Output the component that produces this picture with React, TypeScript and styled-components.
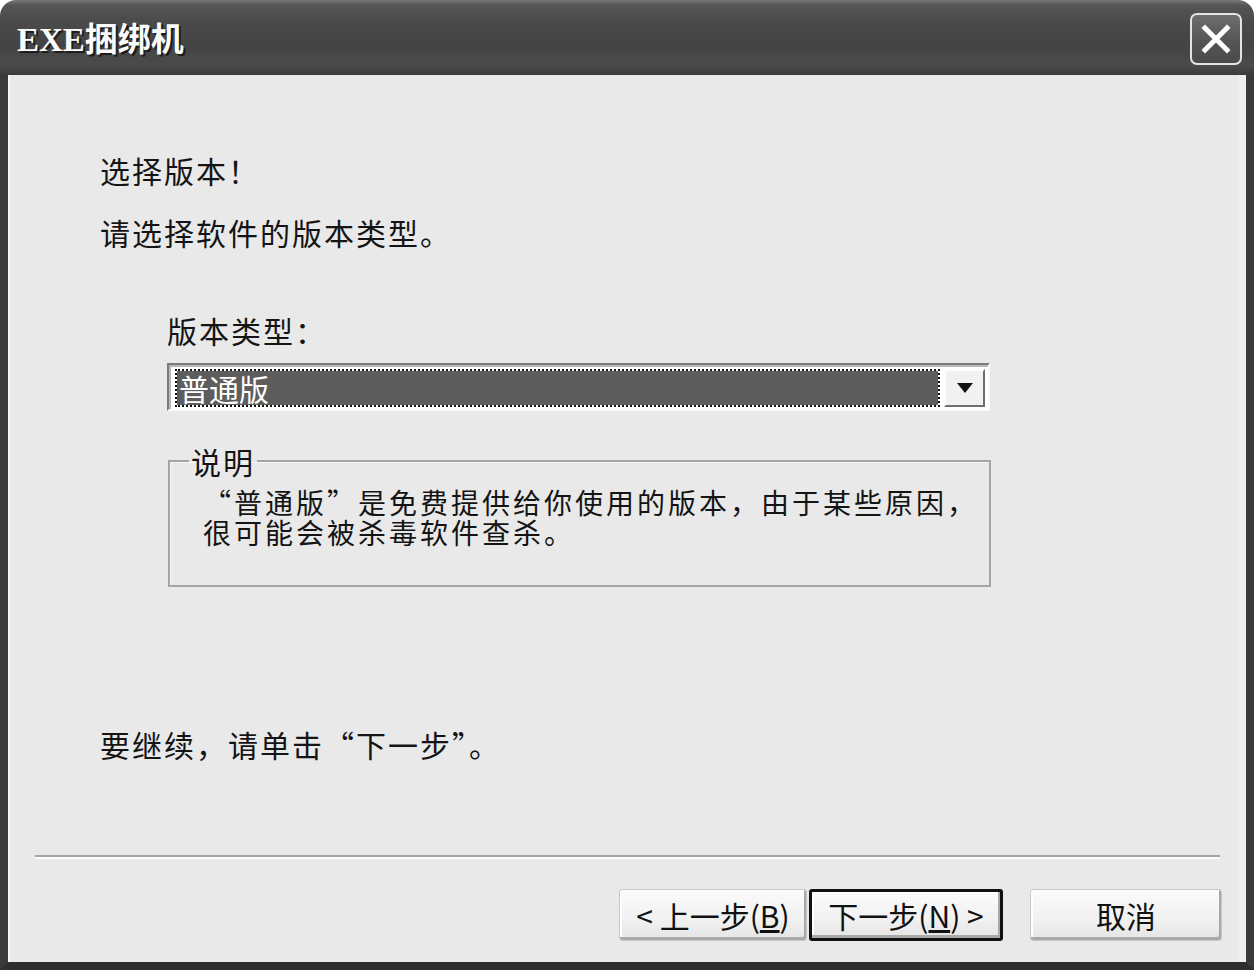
import React from "react";
import styled, { createGlobalStyle } from "styled-components";

const GlobalStyle = createGlobalStyle`
  html, body {
    margin: 0;
    padding: 0;
    background: #ffffff;
  }
  body {
    font-family: "Noto Sans CJK SC", "Noto Sans", sans-serif;
    color: #141414;
  }
`;

const Window = styled.div`
  width: 1254px;
  height: 970px;
  display: flex;
  flex-direction: column;
  box-sizing: border-box;
`;

const TitleBar = styled.div`
  height: 75px;
  flex: none;
  display: flex;
  align-items: center;
  justify-content: space-between;
  padding: 0 12px 0 17px;
  box-sizing: border-box;
  border-radius: 16px 16px 0 0;
  background: linear-gradient(
    #767676 0,
    #555555 7%,
    #4a4a4a 30%,
    #444444 60%,
    #4b4b4b 88%,
    #3a3a3a 100%
  );
`;

const Title = styled.div`
  font-family: "Liberation Serif", "Noto Sans CJK SC", serif;
  font-weight: 700;
  font-size: 33px;
  line-height: 40px;
  color: #fbfbfb;
  text-shadow: 2px 2px 0 #1c1c1c;
  margin-top: 4px;
`;

const CloseButton = styled.div`
  width: 52px;
  height: 52px;
  box-sizing: border-box;
  border: 2px solid #e4e4e4;
  border-radius: 7px;
  background: linear-gradient(#6e6e6e, #555555 55%, #4a4a4a);
  display: flex;
  align-items: center;
  justify-content: center;
  margin-top: 2px;
`;

const Frame = styled.div`
  flex: 1;
  display: flex;
  flex-direction: column;
  border-left: 8px solid #3a3a3a;
  border-right: 8px solid #3a3a3a;
  border-bottom: 8px solid #2e2e2e;
  background: #e9e9e9;
  box-shadow: inset 2px 0 0 #f6f6f6, inset -8px 0 0 #eeeeee;
`;

const Content = styled.div`
  flex: 1;
  display: flex;
  flex-direction: column;
  padding: 75px 0 0 92px;
`;

const Text = styled.div<{ $gap?: number; $indent?: number }>`
  font-size: 30px;
  line-height: 40px;
  letter-spacing: 2px;
  margin-top: ${(p) => p.$gap ?? 0}px;
  margin-left: ${(p) => p.$indent ?? 0}px;
  white-space: nowrap;
`;

const Combo = styled.div`
  margin: 13px 0 0 67px;
  width: 823px;
  height: 48px;
  box-sizing: border-box;
  display: flex;
  align-items: stretch;
  gap: 4px;
  padding: 4px 3px 2px 6px;
  background: #ffffff;
  border-top: 2px solid #7c7c7c;
  border-left: 2px solid #7c7c7c;
  border-right: 2px solid #fafafa;
  border-bottom: 2px solid #fafafa;
  box-shadow: inset 2px 2px 0 #b8b8b8;
`;

const Selection = styled.div`
  flex: 1;
  display: flex;
  align-items: center;
  padding-left: 2px;
  background-color: #5d5d5d;
  background-clip: padding-box;
  border: 2px dotted #111111;
  color: #ffffff;
  font-size: 30px;
  line-height: 30px;
`;

const DropButton = styled.div`
  width: 41px;
  box-sizing: border-box;
  display: flex;
  align-items: center;
  justify-content: center;
  background: #f1f1f1;
  border-top: 2px solid #fdfdfd;
  border-left: 2px solid #fdfdfd;
  border-right: 2px solid #6e6e6e;
  border-bottom: 2px solid #6e6e6e;
`;

const Arrow = styled.div`
  width: 0;
  height: 0;
  border-left: 8px solid transparent;
  border-right: 8px solid transparent;
  border-top: 10px solid #111111;
`;

const GroupBox = styled.fieldset`
  margin: 30px 0 0 68px;
  width: 823px;
  box-sizing: border-box;
  padding: 6px 0 38px 33px;
  border: 2px solid #a4a4a4;
  box-shadow: inset 1px 1px 0 #f7f7f7;
  min-inline-size: 0;
`;

const Legend = styled.legend`
  margin-left: -14px;
  padding: 0 2px;
  font-size: 30px;
  line-height: 40px;
  letter-spacing: 2px;
`;

const Description = styled.div`
  font-size: 28px;
  line-height: 30px;
  letter-spacing: 3px;
  white-space: nowrap;
`;

const Separator = styled.div`
  margin: 91px 0 0 -65px;
  width: 1185px;
  height: 2px;
  background: #a3a3a3;
  border-bottom: 2px solid #fbfbfb;
`;

const ButtonRow = styled.div`
  display: flex;
  justify-content: flex-end;
  align-items: center;
  margin: 30px 24px 0 0;
`;

const Button = styled.div<{ $default?: boolean; $width: number; $gap?: number }>`
  width: ${(p) => p.$width}px;
  height: 52px;
  box-sizing: border-box;
  margin-left: ${(p) => p.$gap ?? 0}px;
  display: flex;
  align-items: center;
  justify-content: center;
  font-size: 30px;
  line-height: 30px;
  color: #111111;
  border-radius: 3px;
  background: linear-gradient(#fbfbfb, #f1f1f1 60%, #e4e4e4);
  border: ${(p) => (p.$default ? "3px solid #111111" : "1px solid #c8c8c8")};
  box-shadow: inset -2px -3px 0 #a9a9a9, inset 2px 2px 0 #ffffff;
  white-space: pre;
`;

export default function App() {
  return (
    <>
      <GlobalStyle />
      <Window>
        <TitleBar>
          <Title>EXE捆绑机</Title>
          <CloseButton>
            <svg width="30" height="30" viewBox="0 0 30 30">
              <path d="M4 4 L26 26 M26 4 L4 26" stroke="#ffffff" strokeWidth="5" strokeLinecap="square" />
            </svg>
          </CloseButton>
        </TitleBar>
        <Frame>
          <Content>
            <Text>选择版本！</Text>
            <Text $gap={22}>请选择软件的版本类型。</Text>
            <Text $gap={58} $indent={67}>版本类型：</Text>
            <Combo>
              <Selection>普通版</Selection>
              <DropButton>
                <Arrow />
              </DropButton>
            </Combo>
            <GroupBox>
              <Legend>说明</Legend>
              <Description>
                “普通版”是免费提供给你使用的版本，由于某些原因，
                <br />
                很可能会被杀毒软件查杀。
              </Description>
            </GroupBox>
            <Text $gap={137}>要继续，请单击“下一步”。</Text>
            <Separator />
            <ButtonRow>
              <Button $width={188}>
                {"< 上一步("}<u>B</u>{")"}
              </Button>
              <Button $width={194} $gap={2} $default>
                {"下一步("}<u>N</u>{") >"}
              </Button>
              <Button $width={192} $gap={27}>
                取消
              </Button>
            </ButtonRow>
          </Content>
        </Frame>
      </Window>
    </>
  );
}
